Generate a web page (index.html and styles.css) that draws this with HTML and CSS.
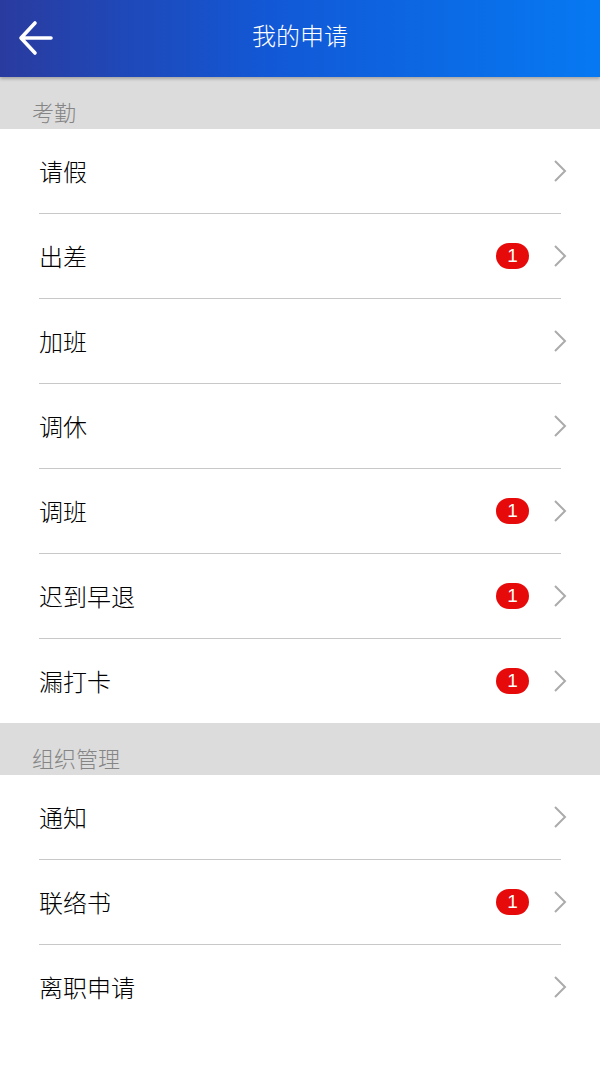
FILE: index.html
```html
<!DOCTYPE html>
<html lang="zh">
<head>
<meta charset="utf-8">
<link rel="stylesheet" href="styles.css">
</head>
<body>
<header class="topbar">
  <svg class="back" width="36" height="36" viewBox="0 0 36 36">
    <path d="M33 18H4M17 3L3 18l14 15" fill="none" stroke="#fff" stroke-width="3.6" stroke-linecap="round" stroke-linejoin="round"/>
  </svg>
  <h1 class="title">我的申请</h1>
</header>
<main>
  <div class="section">考勤</div>
  <ul class="list">
    <li class="row"><span class="label">请假</span><svg class="chev" width="14" height="24" viewBox="0 0 14 24"><path d="M2 2l10 10L2 22" fill="none" stroke="#ababab" stroke-width="2"/></svg></li>
    <li class="row"><span class="label">出差</span><span class="badge">1</span><svg class="chev" width="14" height="24" viewBox="0 0 14 24"><path d="M2 2l10 10L2 22" fill="none" stroke="#ababab" stroke-width="2"/></svg></li>
    <li class="row"><span class="label">加班</span><svg class="chev" width="14" height="24" viewBox="0 0 14 24"><path d="M2 2l10 10L2 22" fill="none" stroke="#ababab" stroke-width="2"/></svg></li>
    <li class="row"><span class="label">调休</span><svg class="chev" width="14" height="24" viewBox="0 0 14 24"><path d="M2 2l10 10L2 22" fill="none" stroke="#ababab" stroke-width="2"/></svg></li>
    <li class="row"><span class="label">调班</span><span class="badge">1</span><svg class="chev" width="14" height="24" viewBox="0 0 14 24"><path d="M2 2l10 10L2 22" fill="none" stroke="#ababab" stroke-width="2"/></svg></li>
    <li class="row"><span class="label">迟到早退</span><span class="badge">1</span><svg class="chev" width="14" height="24" viewBox="0 0 14 24"><path d="M2 2l10 10L2 22" fill="none" stroke="#ababab" stroke-width="2"/></svg></li>
    <li class="row last"><span class="label">漏打卡</span><span class="badge">1</span><svg class="chev" width="14" height="24" viewBox="0 0 14 24"><path d="M2 2l10 10L2 22" fill="none" stroke="#ababab" stroke-width="2"/></svg></li>
  </ul>
  <div class="section">组织管理</div>
  <ul class="list">
    <li class="row"><span class="label">通知</span><svg class="chev" width="14" height="24" viewBox="0 0 14 24"><path d="M2 2l10 10L2 22" fill="none" stroke="#ababab" stroke-width="2"/></svg></li>
    <li class="row"><span class="label">联络书</span><span class="badge">1</span><svg class="chev" width="14" height="24" viewBox="0 0 14 24"><path d="M2 2l10 10L2 22" fill="none" stroke="#ababab" stroke-width="2"/></svg></li>
    <li class="row last"><span class="label">离职申请</span><svg class="chev" width="14" height="24" viewBox="0 0 14 24"><path d="M2 2l10 10L2 22" fill="none" stroke="#ababab" stroke-width="2"/></svg></li>
  </ul>
</main>
</body>
</html>
```
FILE: styles.css
```css
* { box-sizing: border-box; }
html, body { margin: 0; padding: 0; }
body {
  width: 600px;
  height: 1067px;
  background: #fff;
  font-family: "Noto Sans CJK SC", "Noto Sans", sans-serif;
  overflow: hidden;
}
.topbar {
  height: 77px;
  display: flex;
  align-items: center;
  justify-content: center;
  position: relative;
  background: linear-gradient(90deg, #2a3b9f 0%, #1258d6 45%, #0679f2 100%);
  box-shadow: 0 2px 3px rgba(0,0,0,0.25);
  z-index: 2;
}
.back {
  position: absolute;
  left: 18px;
  top: 20px;
}
.title {
  margin: 0;
  color: #fff;
  font-size: 24px;
  font-weight: 300;
  line-height: 1;
  margin-top: -7px;
}
.section {
  height: 52px;
  background: #dcdcdc;
  color: #858585;
  font-size: 22px;
  font-weight: 300;
  line-height: 22px;
  padding: 23px 0 0 32px;
}
.list {
  list-style: none;
  margin: 0;
  padding: 0;
}
.row {
  height: 85px;
  margin: 0 39px;
  display: flex;
  align-items: center;
  border-bottom: 1px solid #c8c8c8;
}
.row.last { border-bottom: none; height: 84px; }
.label {
  flex: 1;
  font-size: 24px;
  font-weight: 300;
  color: #000;
  margin-top: -1px;
}
.badge {
  width: 33px;
  height: 26px;
  border-radius: 13px;
  background: #e60a0a;
  color: #fff;
  font-family: "Liberation Sans", Arial, sans-serif;
  font-size: 19px;
  display: flex;
  align-items: center;
  justify-content: center;
  margin-right: 24px;
}
.chev {
  display: block;
  margin-right: -6px;
}
```
